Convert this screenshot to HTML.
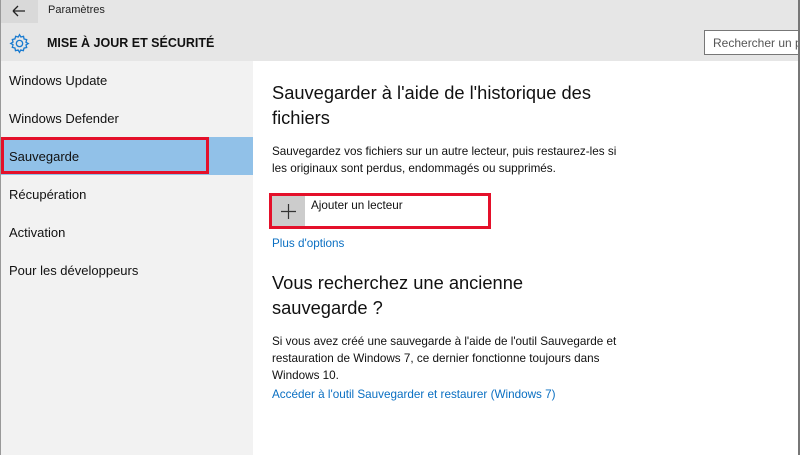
<!DOCTYPE html>
<html><head><meta charset="utf-8"><style>
*{margin:0;padding:0;box-sizing:border-box}
body{width:800px;height:455px;overflow:hidden;font-family:"Liberation Sans",sans-serif;background:#fff;position:relative;color:#000}
.hdr{position:absolute;left:0;top:0;width:800px;height:61px;background:#e6e6e6}
.back{position:absolute;left:0;top:0;width:38px;height:23px;background:#d9d9d9}
.abs{position:absolute;white-space:nowrap}
.side{position:absolute;left:0;top:61px;width:253px;height:394px;background:#f2f2f2}
.item{position:absolute;left:9px;font-size:13px;color:#111}
.sel{position:absolute;left:0;top:137px;width:253px;height:38px;background:#91c1e8}
.red{position:absolute;border:3px solid #e4102a}
.t{font-size:18.3px;color:#111;line-height:25px}
.p{font-size:11.7px;color:#111;line-height:17px}
.l{font-size:11.7px;color:#0a6fc2}
</style></head><body>
<div class="hdr"></div>
<div class="back"></div>
<svg class="abs" style="left:12px;top:5px" width="14" height="12"><path d="M1 6H13M1 6L6 1M1 6L6 11" stroke="#222" stroke-width="1.3" fill="none"/></svg>
<div class="abs" style="left:48px;top:4px;font-size:11px;color:#222">Paramètres</div>
<svg class="abs" style="left:9px;top:33px" width="21" height="21" viewBox="0 0 24 24"><path d="M12 2l1.6 2.6 3-.8.6 3 3 .8-.8 3L22 12l-2.6 1.6.8 3-3 .6-.8 3-3-.8L12 22l-1.6-2.6-3 .8-.6-3-3-.8.8-3L2 12l2.6-1.6-.8-3 3-.6.8-3 3 .8z" fill="none" stroke="#1a7bd0" stroke-width="1.5"/><circle cx="12" cy="12" r="3.6" fill="none" stroke="#1a7bd0" stroke-width="1.5"/></svg>
<div class="abs" style="left:47px;top:36px;font-size:12.5px;font-weight:bold;color:#111">MISE À JOUR ET SÉCURITÉ</div>
<div class="abs" style="left:704px;top:30px;width:100px;height:25px;border:1px solid #777;background:#fff;font-size:12px;color:#555;padding:5px 0 0 8px">Rechercher un pa</div>
<div class="side"></div>
<div class="sel"></div>
<div class="item" style="top:73px">Windows Update</div>
<div class="item" style="top:111px">Windows Defender</div>
<div class="item" style="top:149px">Sauvegarde</div>
<div class="item" style="top:187px">Récupération</div>
<div class="item" style="top:225px">Activation</div>
<div class="item" style="top:263px">Pour les développeurs</div>
<div class="red" style="left:1px;top:137px;width:208px;height:37px"></div>
<div class="abs t" style="left:272px;top:80px">Sauvegarder à l'aide de l'historique des<br>fichiers</div>
<div class="abs p" style="left:272px;top:143px">Sauvegardez vos fichiers sur un autre lecteur, puis restaurez-les si<br>les originaux sont perdus, endommagés ou supprimés.</div>
<div class="abs" style="left:272px;top:195px;width:33px;height:33px;background:#ccc"></div>
<svg class="abs" style="left:281px;top:204px" width="15" height="15"><path d="M7.5 0V15M0 7.5H15" stroke="#333" stroke-width="1.2"/></svg>
<div class="abs p" style="left:311px;top:197px">Ajouter un lecteur</div>
<div class="red" style="left:269px;top:193px;width:222px;height:36px"></div>
<div class="abs l" style="left:272px;top:237px">Plus d'options</div>
<div class="abs t" style="left:272px;top:270px">Vous recherchez une ancienne<br>sauvegarde ?</div>
<div class="abs p" style="left:272px;top:333px">Si vous avez créé une sauvegarde à l'aide de l'outil Sauvegarde et<br>restauration de Windows 7, ce dernier fonctionne toujours dans<br>Windows 10.</div>
<div class="abs l" style="left:272px;top:388px">Accéder à l'outil Sauvegarder et restaurer (Windows 7)</div>
<div class="abs" style="left:798px;top:0;width:2px;height:455px;background:#777"></div>
<div class="abs" style="left:0;top:0;width:1px;height:455px;background:#999"></div>
</body></html>
